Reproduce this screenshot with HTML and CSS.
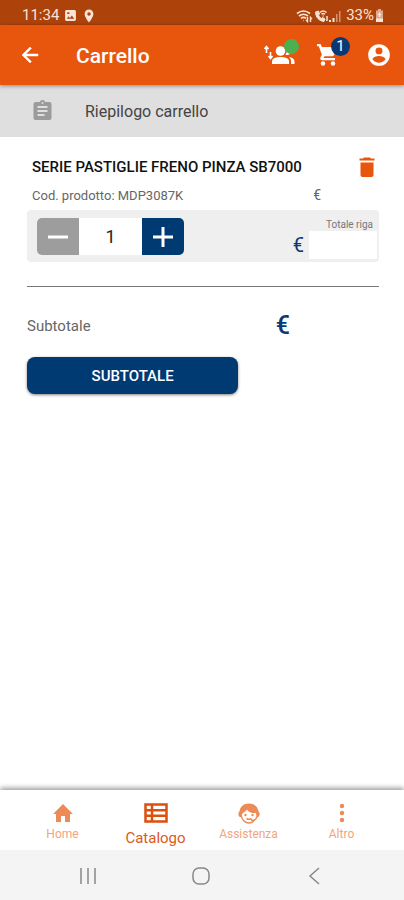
FILE: index.html
```html
<!DOCTYPE html>
<html lang="it">
<head>
  <meta charset="utf-8">
  <meta name="viewport" content="width=device-width, initial-scale=1">
  <title>Carrello</title>
  <link rel="stylesheet" href="styles.css">
</head>
<body>

  <div class="status-bar">
    <div class="status-group">
      <span class="status-time">11:34</span>
      <svg width="13" height="13" viewBox="0 0 24 24" fill="currentColor"><path d="M22 19V5c0-2-1-3-3-3H5C3 2 2 3 2 5v14c0 2 1 3 3 3h14c2 0 3-1 3-3zM8.500 13.500l2.500 3 3.500-4.500 4.500 6H5zM6 6h4v3H6z" fill-rule="evenodd"/></svg>
      <svg class="status-pin" width="14" height="14" viewBox="0 0 24 24" fill="currentColor"><path d="M12 1C7.600 1 4.500 4.300 4.500 8.500 4.500 14 12 23 12 23s7.500-9 7.500-14.500C19.500 4.300 16.400 1 12 1zm0 10.500a3 3 0 1 1 0-6 3 3 0 0 1 0 6z"/></svg>
    </div>
    <div class="status-group status-right">
      <svg width="17" height="14" viewBox="0 0 17 14" fill="none" stroke="currentColor" stroke-width="1.700"><path d="M1 4.500q6.500-5 13 0M3 7q4.500-3.500 9 0M5 9.300q2.500-2 5 0"/><path d="M7.500 11.500h.5M11.500 8v4.500l-1.500-1.500M14.500 13V8.500l1.500 1.500" stroke-width="1.400"/></svg>
      <svg width="14" height="14" viewBox="0 0 14 14" fill="none" stroke="currentColor"><path d="M1.500 3c0 5 3.500 9 8.500 9.500l1-2.500-2.500-1.500-1.200 1Q5 8 4.500 6l1-1L4.500 2z" fill="currentColor"/><path d="M6 3.500q3-3 6.500 0M7.500 5.200q1.700-1.500 3.500 0M9.300 6.500v1M13 7v5" stroke-width="1.500"/></svg>
      <svg width="12" height="14" viewBox="0 0 12 14" fill="currentColor"><path d="M0 11h2v2H0zM3.500 9h2v4h-2z"/><path d="M7 5h1.500v8H7zM10 2h1.500v11H10z" opacity=".5"/></svg>
      <span class="status-battery">33%</span>
      <svg width="9" height="13" viewBox="0 0 9 13"><path d="M3 0h3v1.500h2V13H1V1.500h2z" fill="currentColor" opacity=".65"/><path d="M4.500 3l2 3H5.300v2H3.700V6H2.500zM1 9.500h7V13H1z" fill="currentColor"/></svg>
    </div>
  </div>

  <header class="app-bar">
    <button class="icon-button" type="button" aria-label="Indietro">
      <svg width="24" height="24" viewBox="0 0 24 24" fill="currentColor" stroke="currentColor" stroke-width=".5"><path d="M20 11H7.830l5.590-5.590L12 4l-8 8 8 8 1.410-1.410L7.830 13H20z"/></svg>
    </button>
    <h1 class="app-title">Carrello</h1>
    <div class="app-actions">
      <button class="icon-button users-button" type="button" aria-label="Clienti">
        <svg width="32" height="24" viewBox="0 0 32 24" fill="currentColor"><circle cx="16.500" cy="8" r="4.800"/><path d="M8 21v-2.500c0-3.500 4.500-4.500 8.500-4.500s8.500 1 8.500 4.500V21z"/><path d="M21.500 3.800c3.200-1 5.500 1.100 5.500 4s-2.300 5-5.500 4c1.800-2.500 1.800-5.500 0-8zM25 14c3 .6 5.500 1.800 5.500 4.500V21H27v-2.500c0-2-.7-3.400-2-4.500z"/><path d="M2.500 10V4M.5 6l2-2.500 2 2.500M6.500 9v6M4.500 13l2 2.500 2-2.500" fill="none" stroke="currentColor" stroke-width="1.600"/></svg>
        <span class="badge badge-online"></span>
      </button>
      <button class="icon-button cart-button" type="button" aria-label="Carrello, 1 articolo">
        <svg width="24" height="24" viewBox="0 0 24 24" fill="currentColor"><path d="M1 1h3.500L6 4h14.500c1 0 1.500.8 1 1.700l-3.600 6.500c-.4.700-1 1.100-1.800 1.100H8.500l-1 1.700H19v2.200H6.200c-1.700 0-2.500-1.500-1.700-3l1.400-2.500L2.800 3.300H1z"/><circle cx="7" cy="20.500" r="2.200"/><circle cx="17" cy="20.500" r="2.200"/></svg>
        <span class="badge badge-count">1</span>
      </button>
      <button class="icon-button" type="button" aria-label="Profilo">
        <svg width="26" height="26" viewBox="0 0 24 24" fill="currentColor"><path d="M12 2a10 10 0 1 0 0 20 10 10 0 0 0 0-20zm0 3a3.200 3.200 0 1 1 0 6.400A3.200 3.200 0 0 1 12 5zm0 14.200c-2.500 0-4.710-1.280-6-3.220.03-1.990 4-3.080 6-3.080s5.970 1.090 6 3.080a7.200 7.200 0 0 1-6 3.220z"/></svg>
      </button>
    </div>
  </header>

  <div class="summary-bar">
    <svg width="25" height="24" viewBox="0 0 24 24" fill="currentColor"><path d="M19 3h-4.180a3 3 0 0 0-5.640 0H5a2 2 0 0 0-2 2v14c0 1.100.9 2 2 2h14a2 2 0 0 0 2-2V5a2 2 0 0 0-2-2zm-7 0a1 1 0 1 1 0 2 1 1 0 0 1 0-2zm2 14H7v-2h7zm3-4H7v-2h10zm0-4H7V7h10z"/></svg>
    <h2 class="summary-title">Riepilogo carrello</h2>
  </div>

  <main class="cart">
    <section class="cart-item">
      <div class="item-head">
        <h3 class="item-name">SERIE PASTIGLIE FRENO PINZA SB7000</h3>
        <button class="icon-button delete-button" type="button" aria-label="Elimina">
          <svg width="16" height="20" viewBox="0 0 16 20" fill="currentColor"><path d="M1.500 5.500h13V18c0 1.100-.9 2-2 2h-9c-1.100 0-2-.9-2-2zM5 .5h6l1 1h3.500v2H.5v-2H4z"/></svg>
        </button>
      </div>
      <div class="item-info">
        <span>Cod. prodotto: MDP3087K</span>
        <span class="item-price">€</span>
      </div>
      <div class="item-row">
        <div class="stepper">
          <button class="step-button step-minus" type="button" aria-label="Diminuisci">
            <svg width="20" height="20" viewBox="0 0 20 20"><path d="M0 10h20" stroke="currentColor" stroke-width="3"/></svg>
          </button>
          <input class="step-input" type="text" value="1" aria-label="Quantità">
          <button class="step-button step-plus" type="button" aria-label="Aumenta">
            <svg width="20" height="20" viewBox="0 0 20 20"><path d="M0 10h20M10 0v20" stroke="currentColor" stroke-width="3"/></svg>
          </button>
        </div>
        <div class="row-total">
          <label class="row-total-label" for="rowTotal">Totale riga</label>
          <div class="row-total-value">
            <span class="row-total-euro">€</span>
            <input class="row-total-input" id="rowTotal" type="text" readonly>
          </div>
        </div>
      </div>
    </section>

    <section class="cart-total">
      <div class="subtotal">
        <span class="subtotal-label">Subtotale</span>
        <span class="subtotal-euro">€</span>
      </div>
      <button class="subtotal-button" type="button">SUBTOTALE</button>
    </section>
  </main>

  <nav class="tab-bar">
    <a class="tab" href="#home">
      <svg width="24" height="24" viewBox="0 0 24 24" fill="currentColor"><path d="M10 21v-6h4v6h5v-8h3L12 3 2 13h3v8z"/></svg>
      Home
    </a>
    <a class="tab tab-active" href="#catalogo">
      <svg width="24" height="24" viewBox="0 0 24 24" fill="none" stroke="currentColor" stroke-width="2.500"><path d="M1.500 3.500h21v17h-21zM8 3.500v17M1.500 9.200h21M1.500 14.800h21"/></svg>
      Catalogo
    </a>
    <a class="tab" href="#assistenza">
      <svg width="24" height="24" viewBox="0 0 24 24"><path d="M12 2.500C6.500 2.500 3 6 2.500 10.500 1 11 1 15.500 2.800 16h2c-1-4 3.200-4.500 5.200-7.500 2 3 5.500 4 9 3.500l.5 4h1.700c1.800-.5 1.800-5 .3-5.500C21 6 17.500 2.500 12 2.500z" fill="currentColor"/><path d="M4 14c.7 4.500 4 8 8 8 2 0 3.500-.7 4.800-2M20 15.500c-.5 2-1.500 3.200-3 3.800h-3M9.500 17.500q2.500 1.500 5 0" fill="none" stroke="currentColor" stroke-width="1.500"/><circle cx="8.500" cy="14" r="1.200" fill="currentColor"/><circle cx="15.500" cy="14" r="1.200" fill="currentColor"/></svg>
      Assistenza
    </a>
    <a class="tab" href="#altro">
      <svg width="24" height="24" viewBox="0 0 24 24" fill="currentColor"><circle cx="12" cy="5" r="2.200"/><circle cx="12" cy="12" r="2.200"/><circle cx="12" cy="19" r="2.200"/></svg>
      Altro
    </a>
  </nav>

  <div class="system-bar">
    <button class="system-button" type="button" aria-label="Recenti">
      <svg width="20" height="20" viewBox="0 0 20 20"><path d="M3 2v16M10 2v16M17 2v16"/></svg>
    </button>
    <button class="system-button" type="button" aria-label="Home">
      <svg width="20" height="20" viewBox="0 0 20 20"><rect x="2" y="2" width="16" height="16" rx="6"/></svg>
    </button>
    <button class="system-button" type="button" aria-label="Indietro">
      <svg width="20" height="20" viewBox="0 0 20 20"><path d="M15 2l-9 8 9 8"/></svg>
    </button>
  </div>

</body>
</html>
```

FILE: styles.css
```css
* {
  box-sizing: border-box;
}

body {
  margin: 0;
  min-height: 100vh;
  display: flex;
  flex-direction: column;
  font-family: Roboto, "Liberation Sans", sans-serif;
  background-color: #fff;
  color: #111;
}

h1,
h2,
h3 {
  margin: 0;
}

button,
input {
  font-family: inherit;
  border: none;
  padding: 0;
}

button {
  cursor: pointer;
}

svg {
  display: block;
  flex: none;
}

.status-bar {
  height: 25px;
  padding: 6px 20px 0 22px;
  display: flex;
  justify-content: space-between;
  background-color: #ad420b;
  color: #fbe3d6;
  font-size: 15px;
  line-height: 19px;
}

.status-group {
  display: flex;
  align-items: center;
  gap: 5px;
}

.status-right {
  gap: 1px;
}

.status-battery {
  margin-left: 4px;
}

.app-bar {
  height: 60px;
  padding: 0 12px 0 18px;
  display: flex;
  align-items: center;
  background-color: #e8560d;
  color: #fff;
  box-shadow: 0 1px 4px rgba(0, 0, 0, 0.4);
  z-index: 1;
}

.icon-button {
  position: relative;
  display: flex;
  background: none;
  color: inherit;
}

.app-title {
  margin-left: 34px;
  padding-top: 2px;
  font-size: 21px;
  font-weight: 500;
}

.app-actions {
  margin-left: auto;
  display: flex;
  align-items: center;
  gap: 20px;
}

.badge {
  position: absolute;
  border-radius: 50%;
}

.badge-online {
  width: 15px;
  height: 15px;
  top: -4px;
  right: -3px;
  background-color: #4caf50;
}

.badge-count {
  width: 19px;
  height: 19px;
  top: -6px;
  right: -10px;
  background-color: #0a3874;
  font-size: 15px;
  line-height: 19px;
  text-align: center;
}

.cart-button {
  margin-right: 6px;
}

.summary-bar {
  height: 52px;
  padding: 0 30px;
  display: flex;
  align-items: center;
  gap: 30px;
  background-color: #dfdfdf;
  color: #9b9b9b;
}

.summary-title {
  font-size: 16px;
  font-weight: 400;
  color: #444;
}

.cart {
  flex: 1;
  padding: 20px 25px 24px 27px;
}

.cart-item {
  padding-bottom: 24px;
  border-bottom: 1px solid #777;
}

.item-head {
  padding: 0 4px 0 5px;
  display: flex;
  align-items: center;
  justify-content: space-between;
}

.item-name {
  font-size: 15px;
  font-weight: 500;
}

.delete-button {
  color: #e8560d;
}

.item-info {
  padding: 10px 58px 6px 5px;
  display: flex;
  align-items: center;
  justify-content: space-between;
  font-size: 13px;
  line-height: 17px;
  color: #666;
}

.item-price {
  font-size: 14px;
}

.item-row {
  padding: 8px 2px 3px 10px;
  display: flex;
  align-items: flex-start;
  justify-content: space-between;
  background-color: #efefef;
  border-radius: 4px;
}

.stepper {
  display: flex;
  height: 37px;
  border-radius: 5px;
  overflow: hidden;
}

.step-button {
  width: 42px;
  display: flex;
  align-items: center;
  justify-content: center;
  color: #fff;
}

.step-minus {
  background-color: #9d9d9d;
}

.step-plus {
  background-color: #003a73;
}

.step-input {
  width: 63px;
  font-size: 18px;
  text-align: center;
  color: #222;
  background-color: #fff;
}

.row-total-label {
  display: block;
  padding-right: 4px;
  font-size: 10px;
  line-height: 13px;
  text-align: right;
  color: #777;
}

.row-total-value {
  display: flex;
  align-items: center;
  gap: 5px;
}

.row-total-euro {
  font-size: 20px;
  line-height: 20px;
  color: #0a3874;
}

.row-total-input {
  width: 68px;
  height: 28px;
  background-color: #fff;
}

.subtotal {
  padding: 24px 89px 16px 0;
  display: flex;
  align-items: center;
  justify-content: space-between;
}

.subtotal-label {
  font-size: 15px;
  color: #666;
}

.subtotal-euro {
  font-size: 25px;
  font-weight: 500;
  line-height: 30px;
  color: #0a3874;
}

.subtotal-button {
  width: 60%;
  height: 37px;
  border-radius: 8px;
  background-color: #003a73;
  color: #fff;
  font-size: 15px;
  font-weight: 500;
  box-shadow: 0 1px 3px rgba(0, 0, 0, 0.5);
}

.tab-bar {
  height: 60px;
  padding: 0 16px;
  display: flex;
  box-shadow: 0 -2px 5px rgba(0, 0, 0, 0.4);
}

.tab {
  flex: 1;
  padding-top: 11px;
  display: flex;
  flex-direction: column;
  align-items: center;
  font-size: 12px;
  line-height: 19px;
  text-decoration: none;
  color: #f0a57c;
}

.tab svg {
  color: #ec8a58;
}

.tab-active {
  font-size: 15px;
  line-height: 26px;
  color: #dc5a1c;
}

.tab-active svg {
  color: #dc4f0e;
}

.system-bar {
  height: 50px;
  padding: 2px 33px 0 31px;
  display: flex;
  align-items: center;
  background-color: #f4f4f4;
}

.system-button {
  flex: 1;
  display: flex;
  justify-content: center;
  background: none;
}

.system-button svg {
  fill: none;
  stroke: #888;
  stroke-width: 1.5;
}
```
